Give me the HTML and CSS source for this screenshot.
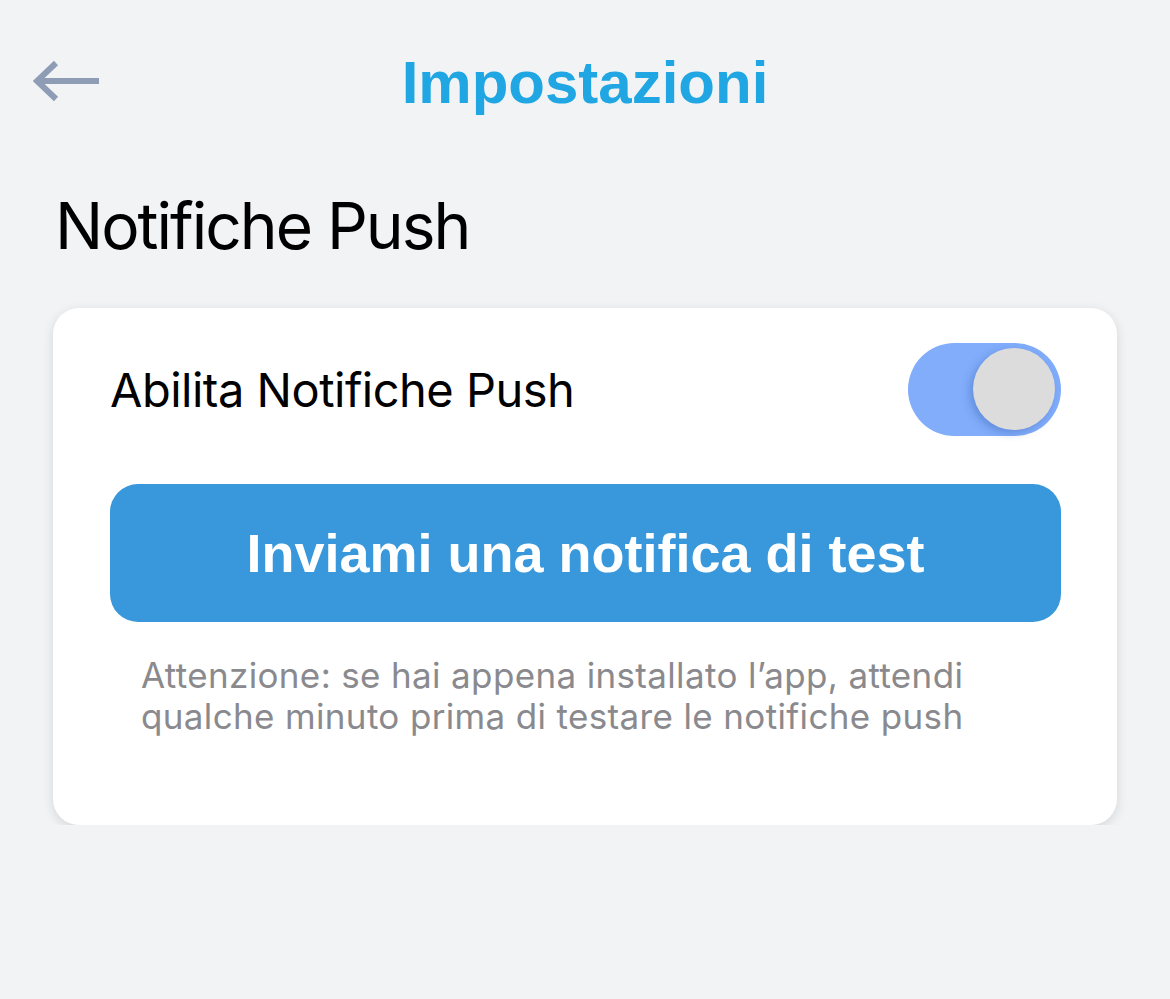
FILE: index.html
```html
<!DOCTYPE html>
<html lang="it">
<head>
    <meta charset="UTF-8">
    <meta name="viewport" content="width=device-width, initial-scale=1.0">
    <title>Impostazioni</title>
    <link rel="stylesheet" href="styles.css">
</head>
<body>
    <div class="header">
        <button class="back-btn" aria-label="Indietro">
            <svg width="70" height="44" viewBox="0 0 70 44">
                <path d="M66 21H5M23 3L4 21l19 18" fill="none" stroke="#8e9db5" stroke-width="6" stroke-linecap="butt" stroke-linejoin="miter"/>
            </svg>
        </button>
        <h1 class="title">Impostazioni</h1>
        <span></span>
    </div>

    <h2 class="section-title">Notifiche Push</h2>

    <div class="card">
        <div class="setting-row">
            <span class="setting-label">Abilita Notifiche Push</span>
            <label class="switch">
                <input type="checkbox" checked>
                <span class="knob"></span>
            </label>
        </div>
        <button class="btn">Inviami una notifica di test</button>
        <p class="note">Attenzione: se hai appena installato l’app, attendi qualche minuto prima di testare le notifiche push</p>
    </div>
</body>
</html>
```

FILE: styles.css
```css
body {
    margin: 0;
    background-color: #f2f3f5;
    font-family: 'Inter', 'Liberation Sans', sans-serif;
    color: #000;
}
.header {
    display: grid;
    grid-template-columns: 150px 1fr 150px;
    align-items: center;
    height: 164px;
}
.back-btn {
    background: none;
    border: none;
    padding: 0 0 0 33px;
    display: flex;
    align-items: center;
    cursor: pointer;
}
.title {
    margin: 0;
    text-align: center;
    font-family: 'Liberation Sans', sans-serif;
    font-weight: bold;
    font-size: 60px;
    color: #1fa6e3;
}
.section-title {
    margin: 22px 0 0 55px;
    font-weight: 400;
    font-size: 64px;
    line-height: 80px;
    letter-spacing: -2px;
}
.card {
    margin: 42px 53px 0;
    padding: 35px 56px 88px 57px;
    background-color: #ffffff;
    border-radius: 26px;
    box-shadow: 0 3px 12px rgba(0,0,0,0.12);
}
.setting-row {
    display: flex;
    justify-content: space-between;
    align-items: center;
}
.setting-label {
    font-size: 47px;
    letter-spacing: -0.5px;
}
.switch {
    position: relative;
    width: 153px;
    height: 93px;
    border-radius: 47px;
    background-color: #81adfb;
    cursor: pointer;
}
.switch input {
    display: none;
}
.knob {
    position: absolute;
    top: 5px;
    right: 6px;
    width: 82px;
    height: 82px;
    border-radius: 50%;
    background-color: #dcdcdc;
    box-shadow: -3px 3px 8px rgba(40,80,160,0.35);
}
.btn {
    display: block;
    width: 100%;
    height: 138px;
    margin-top: 48px;
    border: none;
    border-radius: 28px;
    background-color: #3898db;
    color: #ffffff;
    font-family: 'Liberation Sans', sans-serif;
    font-weight: bold;
    font-size: 54px;
    cursor: pointer;
}
.note {
    margin: 33px 0 0 31px;
    font-size: 35px;
    line-height: 41px;
    letter-spacing: 0.35px;
    color: #8a8a8e;
}
```
